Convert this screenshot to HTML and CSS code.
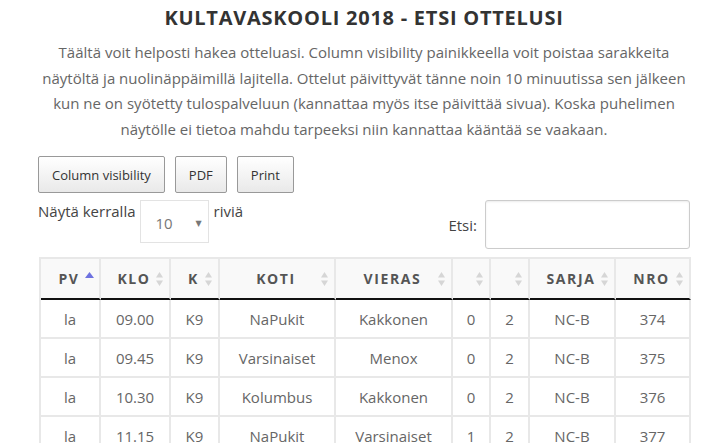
FILE: index.html
```html
<!DOCTYPE html>
<html lang="fi">
<head>
<meta charset="utf-8">
<title>Kultavaskooli 2018 - Etsi ottelusi</title>
<link rel="stylesheet" href="styles.css">
</head>
<body>
<div class="page">
  <h1 class="title">KULTAVASKOOLI 2018 - ETSI OTTELUSI</h1>
  <p class="intro">Täältä voit helposti hakea otteluasi. Column visibility painikkeella voit poistaa sarakkeita näytöltä ja nuolinäppäimillä lajitella. Ottelut päivittyvät tänne noin 10 minuutissa sen jälkeen kun ne on syötetty tulospalveluun (kannattaa myös itse päivittää sivua). Koska puhelimen näytölle ei tietoa mahdu tarpeeksi niin kannattaa kääntää se vaakaan.</p>

  <div class="buttons">
    <button class="btn">Column visibility</button>
    <button class="btn">PDF</button>
    <button class="btn">Print</button>
  </div>

  <div class="controls">
    <div class="length">
      <span class="length-label">Näytä kerralla</span>
      <div class="select"><span>10</span><span class="caret">▼</span></div>
      <span class="length-unit">riviä</span>
    </div>
    <div class="search">
      <span>Etsi:</span>
      <div class="input"></div>
    </div>
  </div>

  <table class="matches">
    <colgroup>
      <col style="width:60px"><col style="width:70px"><col style="width:49px"><col style="width:116px"><col style="width:117px"><col style="width:38px"><col style="width:39px"><col style="width:86px"><col style="width:75px">
    </colgroup>
    <thead>
      <tr>
        <th>PV<svg class="sort" viewBox="0 0 9 14"><path d="M4.5 0 L9 6 L0 6 Z" fill="#6e72e0"/></svg></th>
        <th>KLO<svg class="sort" viewBox="0 0 9 14"><path d="M4.5 0 L8 5.5 L1 5.5 Z M4.5 14 L8 8.5 L1 8.5 Z" fill="#d6d6d6"/></svg></th>
        <th>K<svg class="sort" viewBox="0 0 9 14"><path d="M4.5 0 L8 5.5 L1 5.5 Z M4.5 14 L8 8.5 L1 8.5 Z" fill="#d6d6d6"/></svg></th>
        <th>KOTI<svg class="sort" viewBox="0 0 9 14"><path d="M4.5 0 L8 5.5 L1 5.5 Z M4.5 14 L8 8.5 L1 8.5 Z" fill="#d6d6d6"/></svg></th>
        <th>VIERAS<svg class="sort" viewBox="0 0 9 14"><path d="M4.5 0 L8 5.5 L1 5.5 Z M4.5 14 L8 8.5 L1 8.5 Z" fill="#d6d6d6"/></svg></th>
        <th><svg class="sort" viewBox="0 0 9 14"><path d="M4.5 0 L8 5.5 L1 5.5 Z M4.5 14 L8 8.5 L1 8.5 Z" fill="#d6d6d6"/></svg></th>
        <th><svg class="sort" viewBox="0 0 9 14"><path d="M4.5 0 L8 5.5 L1 5.5 Z M4.5 14 L8 8.5 L1 8.5 Z" fill="#d6d6d6"/></svg></th>
        <th>SARJA<svg class="sort" viewBox="0 0 9 14"><path d="M4.5 0 L8 5.5 L1 5.5 Z M4.5 14 L8 8.5 L1 8.5 Z" fill="#d6d6d6"/></svg></th>
        <th>NRO<svg class="sort" viewBox="0 0 9 14"><path d="M4.5 0 L8 5.5 L1 5.5 Z M4.5 14 L8 8.5 L1 8.5 Z" fill="#d6d6d6"/></svg></th>
      </tr>
    </thead>
    <tbody>
      <tr><td>la</td><td>09.00</td><td>K9</td><td>NaPukit</td><td>Kakkonen</td><td>0</td><td>2</td><td>NC-B</td><td>374</td></tr>
      <tr><td>la</td><td>09.45</td><td>K9</td><td>Varsinaiset</td><td>Menox</td><td>0</td><td>2</td><td>NC-B</td><td>375</td></tr>
      <tr><td>la</td><td>10.30</td><td>K9</td><td>Kolumbus</td><td>Kakkonen</td><td>0</td><td>2</td><td>NC-B</td><td>376</td></tr>
      <tr><td>la</td><td>11.15</td><td>K9</td><td>NaPukit</td><td>Varsinaiset</td><td>1</td><td>2</td><td>NC-B</td><td>377</td></tr>
    </tbody>
  </table>
</div>
</body>
</html>
```

FILE: styles.css
```css
html, body {
  margin: 0;
  padding: 0;
  background: #fff;
}

body {
  font-family: "Open Sans", "DejaVu Sans", sans-serif;
  color: #666;
}

.page {
  width: 652px;
  padding: 6px 26px 0 38px;
}

.title {
  margin: 0;
  font-size: 20px;
  font-weight: 700;
  letter-spacing: 0.75px;
  line-height: 24px;
  color: #333;
  text-align: center;
}

.intro {
  margin: 10px 0 0;
  font-size: 15px;
  line-height: 25.6px;
  color: #666;
  text-align: center;
}

.buttons {
  display: flex;
  gap: 10px;
  margin-top: 14px;
}

.btn {
  font-family: "Open Sans", sans-serif;
  font-size: 13px;
  color: #333;
  height: 37px;
  padding: 0 13px;
  border: 1px solid #999;
  border-radius: 2px;
  background: linear-gradient(to bottom, #ffffff 0%, #e9e9e9 100%);
}

.controls {
  display: flex;
  justify-content: space-between;
  align-items: flex-start;
  margin-top: 7px;
}

.length {
  display: flex;
  align-items: flex-start;
  font-size: 15px;
  color: #444;
  line-height: 22px;
}

.length-label {
  margin-right: 4px;
}

.length-unit {
  margin-left: 5px;
}

.select {
  width: 69px;
  height: 43px;
  box-sizing: border-box;
  border: 1px solid #e3e3e3;
  display: flex;
  align-items: center;
  justify-content: space-between;
  padding: 2px 6px 0 15px;
  color: #777;
  font-size: 15px;
}

.caret {
  font-size: 8px;
  color: #777;
}

.search {
  display: flex;
  align-items: center;
  gap: 8px;
  font-size: 15px;
  color: #444;
}

.input {
  width: 205px;
  height: 49px;
  box-sizing: border-box;
  border: 1px solid #ccc;
  border-radius: 3px;
  box-shadow: inset 0 1px 2px rgba(0,0,0,0.08);
}

.matches {
  margin: 8px 0 0 1px;
  width: 650px;
  table-layout: fixed;
  border-collapse: separate;
  border-spacing: 0;
  border-top: 2px solid #e8e8e8;
  border-left: 2px solid #e8e8e8;
}

.matches th,
.matches td {
  border-right: 2px solid #e8e8e8;
  border-bottom: 2px solid #e8e8e8;
  text-align: center;
}

.matches th {
  position: relative;
  height: 39px;
  padding: 0 2px 0 0;
  background: #f9f9f9;
  font-size: 14px;
  font-weight: 700;
  letter-spacing: 1.6px;
  color: #555;
  border-bottom: 2px solid #111;
}

.sort {
  position: absolute;
  right: 5px;
  top: 13px;
  width: 9px;
  height: 14px;
}

.matches td {
  height: 37px;
  padding: 0;
  font-size: 15px;
  color: #666;
}
```
